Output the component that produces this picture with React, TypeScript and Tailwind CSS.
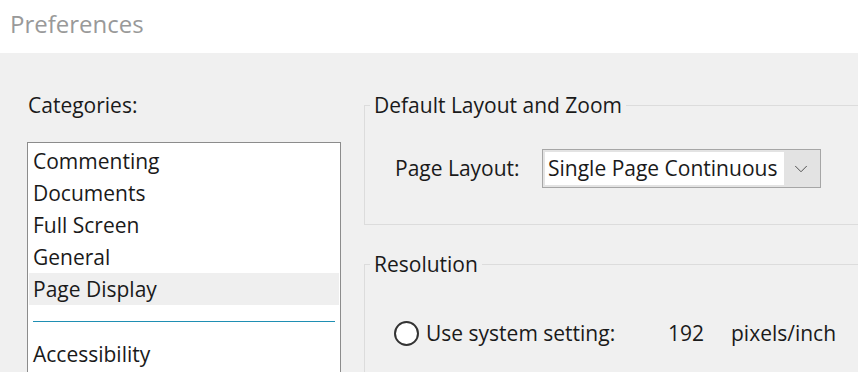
import { ChevronDown } from 'lucide-react';

const categories = ['Commenting', 'Documents', 'Full Screen', 'General', 'Page Display'];

export default function App() {
  const selected = 'Page Display';

  return (
    <div
      className="w-[858px] h-[372px] overflow-hidden bg-[#f0f0f0] text-[#1a1a1a] flex flex-col"
      style={{ fontFamily: '"Open Sans", "Noto Sans", sans-serif' }}
    >
      {/* title bar */}
      <div className="h-[53px] bg-white pl-[10px] pt-[8px] shrink-0">
        <h1 className="text-[24px] leading-[32px] text-[#999999]">Preferences</h1>
      </div>

      <div className="flex pt-[38px]">
        {/* categories */}
        <div className="w-[364px] shrink-0 pl-[27px]">
          <p className="text-[21px] leading-[28px] pl-[1px]">Categories:</p>
          <ul className="mt-[23px] w-[314px] h-[300px] border border-[#8c8c8c] bg-white pt-[2px] text-[21px]">
            {categories.map((c) => (
              <li
                key={c}
                className={`h-[32px] leading-[33px] mx-[1px] pl-[4px] ${c === selected ? 'bg-[#efefef]' : ''}`}
              >
                {c}
              </li>
            ))}
            <li className="mx-[5px] mt-[16px] mb-[16px] border-t border-[#1f8fb3]" />
            <li className="h-[32px] leading-[32px] mx-[1px] pl-[4px]">Accessibility</li>
          </ul>
        </div>

        {/* settings */}
        <div className="flex flex-col">
          <fieldset className="w-[520px] border border-[#dcdcdc] pl-[5px] pb-[36px]">
            <legend className="px-[4px] text-[21px] leading-[28px]">Default Layout and Zoom</legend>
            <div className="flex items-center mt-[30px] pl-[25px]">
              <span className="text-[21px] w-[147px]">Page Layout:</span>
              <div className="w-[279px] h-[39px] border border-[#a6a6a6] bg-[#e3e3e3] flex p-[2px]">
                <div className="w-[239px] bg-white text-[21px] leading-[33px] pl-[3px] whitespace-nowrap overflow-hidden">
                  Single Page Continuous
                </div>
                <div className="flex-1 flex items-center justify-center">
                  <ChevronDown size={22} strokeWidth={1} className="text-[#444]" />
                </div>
              </div>
            </div>
          </fieldset>

          <fieldset className="mt-[25px] w-[520px] h-[140px] border border-[#dcdcdc] pl-[5px]">
            <legend className="px-[4px] text-[21px] leading-[28px]">Resolution</legend>
            <div className="flex items-center mt-[40px] pl-[24px] text-[21px]">
              <span className="w-[25px] h-[25px] rounded-full border-2 border-[#333] bg-white shrink-0" />
              <span className="ml-[7px] w-[242px]">Use system setting:</span>
              <span className="w-[63px]">192</span>
              <span>pixels/inch</span>
            </div>
          </fieldset>
        </div>
      </div>
    </div>
  );
}
